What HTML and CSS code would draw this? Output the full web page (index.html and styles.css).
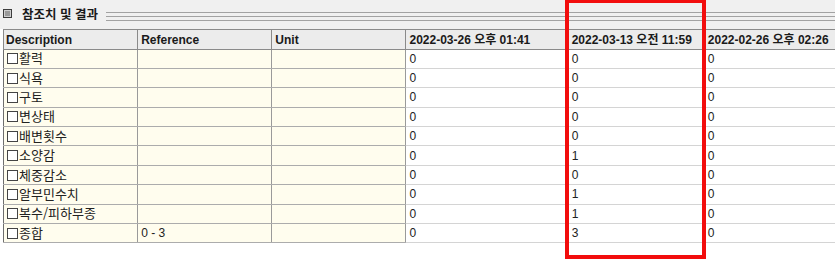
FILE: index.html
```html
<!DOCTYPE html>
<html lang="ko">
<head>
<meta charset="utf-8">
<title>참조치 및 결과</title>
<link rel="stylesheet" href="styles.css">
</head>
<body>
<div class="panel">
  <div class="titlebar">
    <span class="title-box"></span>
    <span class="title">참조치 및 결과</span>
    <span class="rule"></span>
  </div>
  <table class="grid">
    <colgroup>
      <col class="c-desc"><col class="c-ref"><col class="c-unit"><col class="c-d1"><col class="c-d2"><col class="c-d3">
    </colgroup>
    <thead>
      <tr>
        <th class="first">Description</th>
        <th>Reference</th>
        <th>Unit</th>
        <th>2022-03-26 오후 01:41</th>
        <th>2022-03-13 오전 11:59</th>
        <th>2022-02-26 오후 02:26</th>
      </tr>
    </thead>
    <tbody>
      <tr><td class="desc"><span class="cb"></span><span class="ko">활력</span></td><td class="cream"></td><td class="cream"></td><td>0</td><td>0</td><td>0</td></tr>
      <tr><td class="desc"><span class="cb"></span><span class="ko">식욕</span></td><td class="cream"></td><td class="cream"></td><td>0</td><td>0</td><td>0</td></tr>
      <tr><td class="desc"><span class="cb"></span><span class="ko">구토</span></td><td class="cream"></td><td class="cream"></td><td>0</td><td>0</td><td>0</td></tr>
      <tr><td class="desc"><span class="cb"></span><span class="ko">변상태</span></td><td class="cream"></td><td class="cream"></td><td>0</td><td>0</td><td>0</td></tr>
      <tr><td class="desc"><span class="cb"></span><span class="ko">배변횟수</span></td><td class="cream"></td><td class="cream"></td><td>0</td><td>0</td><td>0</td></tr>
      <tr><td class="desc"><span class="cb"></span><span class="ko">소양감</span></td><td class="cream"></td><td class="cream"></td><td>0</td><td>1</td><td>0</td></tr>
      <tr><td class="desc"><span class="cb"></span><span class="ko">체중감소</span></td><td class="cream"></td><td class="cream"></td><td>0</td><td>0</td><td>0</td></tr>
      <tr><td class="desc"><span class="cb"></span><span class="ko">알부민수치</span></td><td class="cream"></td><td class="cream"></td><td>0</td><td>1</td><td>0</td></tr>
      <tr><td class="desc"><span class="cb"></span><span class="ko">복수/피하부종</span></td><td class="cream"></td><td class="cream"></td><td>0</td><td>1</td><td>0</td></tr>
      <tr><td class="desc"><span class="cb"></span><span class="ko">종합</span></td><td class="cream">0 - 3</td><td class="cream"></td><td>0</td><td>3</td><td>0</td></tr>
    </tbody>
  </table>
  <div class="highlight"></div>
</div>
</body>
</html>
```

FILE: styles.css
```css
html, body {
  margin: 0;
  padding: 0;
  background: #ffffff;
  overflow: hidden;
}

.panel {
  position: relative;
  width: 835px;
  height: 259px;
  overflow: hidden;
  font-family: "Liberation Sans", "Noto Sans CJK KR", sans-serif;
  color: #1c1c1c;
}

.titlebar {
  display: flex;
  align-items: flex-start;
  height: 29px;
  background: #f0f0f0;
  padding-left: 3px;
  box-sizing: border-box;
}

.title-box {
  width: 9px;
  height: 9px;
  margin-top: 9px;
  box-sizing: border-box;
  border: 1px solid #3c3c3c;
  background: #9a9a9a;
  box-shadow: inset 0 0 0 1px #cfcfcf;
  flex: none;
}

.title {
  margin-left: 10px;
  margin-top: 5px;
  font-family: "Noto Sans CJK KR", sans-serif;
  font-weight: 700;
  font-size: 12.5px;
  line-height: 17px;
  color: #1a1a1a;
  flex: none;
}

.rule {
  flex: 1;
  margin-left: 8px;
  margin-top: 12px;
  height: 9px;
  box-sizing: border-box;
  border-top: 1px solid #a2a2a2;
  border-bottom: 1px solid #a2a2a2;
  background: linear-gradient(#a2a2a2, #a2a2a2) 0 3px / 100% 1px no-repeat;
}

.grid {
  margin-left: 3px;
  border-collapse: collapse;
  table-layout: fixed;
  width: 838px;
  font-size: 12px;
}

.c-desc, .c-ref, .c-unit { width: 134px; }
.c-d1 { width: 162px; }
.c-d2 { width: 136px; }
.c-d3 { width: 136px; }

.grid th {
  height: 19.5px;
  padding: 1px 3px 0;
  text-align: left;
  font-weight: 700;
  font-size: 12px;
  line-height: 16px;
  background: #ececec;
  border: 1px solid #8a8a8a;
  color: #1a1a1a;
  white-space: nowrap;
  overflow: hidden;
  vertical-align: middle;
  box-sizing: border-box;
}

.grid th.first {
  padding-left: 2px;
}

.grid td {
  height: 19.4px;
  padding: 0 3px;
  border-top: 1px solid #d4d4d4;
  border-bottom: 1px solid #d4d4d4;
  border-left: 1px solid #9a9a9a;
  border-right: 1px solid #9a9a9a;
  background: #ffffff;
  white-space: nowrap;
  overflow: hidden;
  vertical-align: middle;
  line-height: 16px;
  color: #222222;
  box-sizing: border-box;
}

.grid td.desc,
.grid td.cream {
  background: #fffdee;
  border-top-color: #acacac;
  border-bottom-color: #acacac;
}

.grid td.desc {
  border-left-color: #6e6e6e;
  padding-left: 3px;
}

.cb {
  display: inline-block;
  width: 11px;
  height: 11px;
  box-sizing: border-box;
  border: 1px solid #444444;
  background: #ffffff;
  vertical-align: -1px;
  margin-right: 1px;
}

.ko {
  font-family: "Noto Sans CJK KR", sans-serif;
  font-size: 13px;
}

.highlight {
  position: absolute;
  left: 565px;
  top: -1px;
  width: 141px;
  height: 260px;
  box-sizing: border-box;
  border: 4px solid #f20d0d;
  pointer-events: none;
}
```
